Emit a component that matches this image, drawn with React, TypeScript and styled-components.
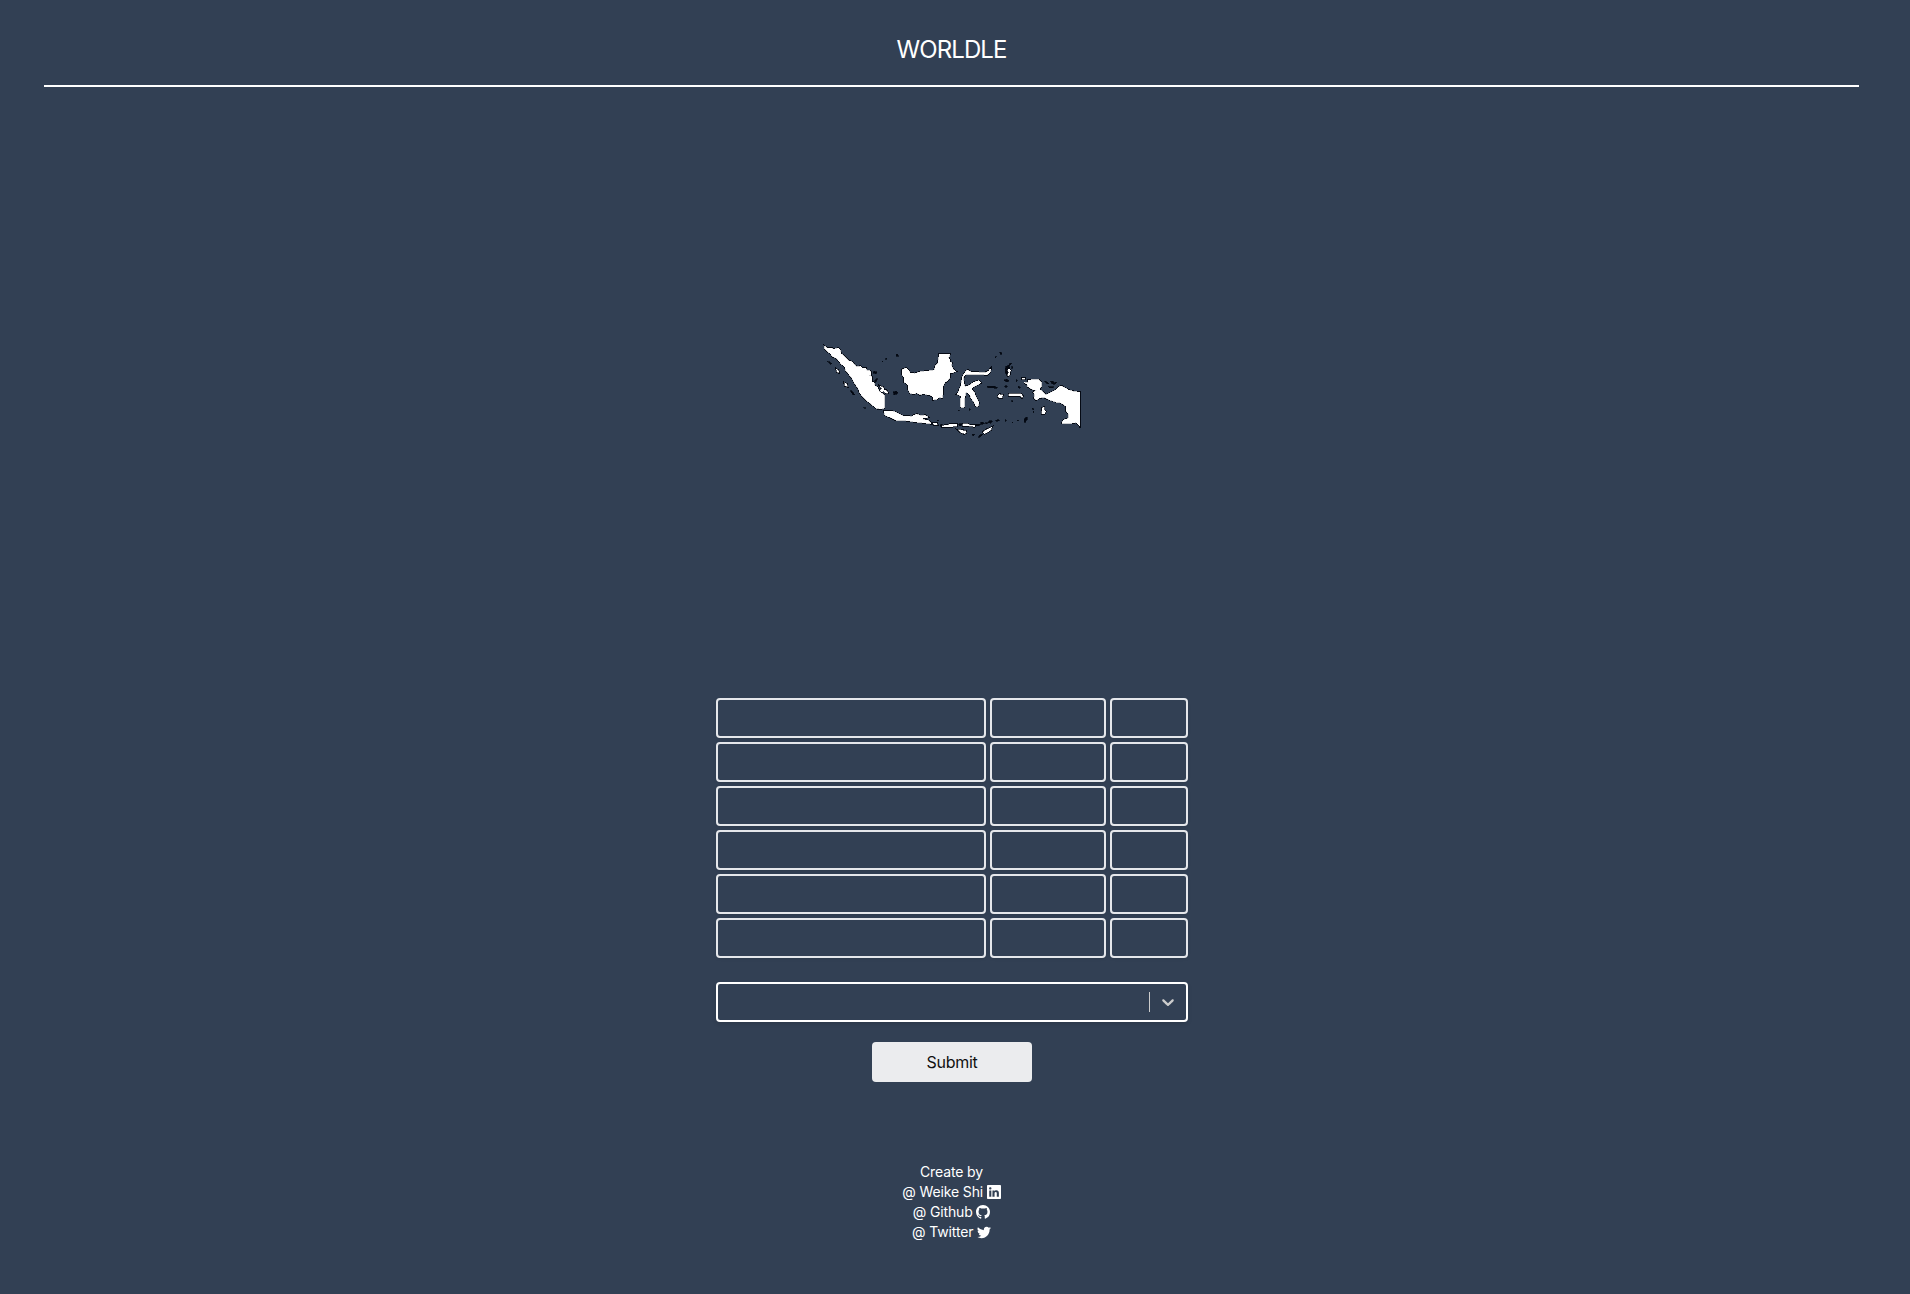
import React from "react";
import styled, { createGlobalStyle } from "styled-components";
import { BsLinkedin, BsGithub, BsTwitter } from "react-icons/bs";

const GlobalStyle = createGlobalStyle`
  * { box-sizing: border-box; }
  body {
    margin: 0;
    background: #324054;
    color: #fff;
    font-family: Inter, "Liberation Sans", sans-serif;
  }
`;

const Page = styled.div`
  width: 1903px;
  height: 1294px;
  display: flex;
  flex-direction: column;
  align-items: center;
  overflow: hidden;
`;

const Header = styled.header`
  width: 1815px;
  height: 87px;
  padding-top: 34px;
  border-bottom: 2px solid #fff;
  text-align: center;
`;

const Title = styled.h1`
  margin: 0;
  font-size: 24px;
  line-height: 32px;
  font-weight: 400;
  letter-spacing: -0.9px;
`;

const MapArea = styled.div`
  height: 611px;
  padding: 253px 0 0 7px;
`;

const MapDrawing = styled.svg`
  display: block;
  width: 270px;
  height: 105px;
`;

const Board = styled.main`
  width: 472px;
  margin-left: 1px;
  display: flex;
  flex-direction: column;
  align-items: center;
`;

const Guesses = styled.div`
  display: grid;
  grid-template-columns: 270px 116px 78px;
  grid-auto-rows: 40px;
  gap: 4px;
`;

const Cell = styled.div`
  border: 2px solid #e5e7eb;
  border-radius: 4px;
  box-shadow: 0 1px 3px rgba(0, 0, 0, 0.1);
`;

const Select = styled.div`
  width: 100%;
  height: 40px;
  margin-top: 24px;
  border: 2px solid #fff;
  border-radius: 4px;
  display: flex;
  align-items: center;
  justify-content: flex-end;
  box-shadow: 0 2px 4px rgba(0, 0, 0, 0.12);
`;

const Separator = styled.span`
  width: 1px;
  height: 20px;
  background: #ccc;
`;

const Indicator = styled.span`
  display: flex;
  padding: 8px;
  color: #ccc;
`;

const Submit = styled.button`
  width: 160px;
  height: 40px;
  margin-top: 20px;
  padding: 0;
  border: 0;
  border-radius: 4px;
  background: #ebecee;
  color: #111;
  font: 400 16px/24px Inter, "Liberation Sans", sans-serif;
  letter-spacing: -0.25px;
`;

const Footer = styled.footer`
  margin-top: 80px;
  font-size: 14px;
  line-height: 20px;
  letter-spacing: -0.13px;
  text-align: center;
`;

const Credit = styled.div`
  display: flex;
  align-items: center;
  justify-content: center;
  gap: 3.5px;
  height: 20px;
`;

const mainIslands = [
  // Sumatra
  "M14 19L21 24L35 24L39 28L55 25L61 30L62 40L73 49L80 57L87 63L96 65L105 77L112 81L121 79L127 84L137 84L139 92L149 93L153 97L152 105L144 108L155 110L155 125L162 128L163 137L173 142L176 153L185 160L192 165L193 205L180 206L168 204L151 190L139 181L129 171L120 159L115 145L104 130L96 114L87 103L78 92L75 81L64 72L55 61L47 53L39 50L30 40L21 33L15 27Z",
  // Borneo
  "M247 89L258 84L266 92L271 99L284 101L300 96L343 91L347 76L354 70L358 43L389 42L388 50L385 53L389 59L390 65L395 69L394 77L399 88L407 94L398 98L390 99L389 112L384 121L375 127L369 138L367 173L357 172L352 177L340 179L339 171L330 165L308 161L300 164L290 158L282 162L270 159L265 149L264 135L253 126L252 112L247 104Z",
  // Java
  "M192 213L205 213L223 215L238 223L250 228L276 230L280 226L291 223L305 228L315 226L324 232L307 234L309 239L323 241L329 245L333 251L318 249L300 247L281 245L263 242L247 240L229 241L213 233L195 225Z",
  // Sulawesi
  "M438 94L443 90L454 97L496 98L506 93L512 86L511 96L502 104L480 103L446 102L435 104L430 113L431 131L435 140L444 139L461 127L477 122L483 128L475 133L464 138L454 146L463 158L467 170L471 177L476 188L474 199L467 198L462 185L455 177L450 166L443 158L436 156L435 168L432 179L433 202L422 201L422 181L424 170L418 165L410 162L415 157L419 147L424 134L427 112L431 104Z",
  // New Guinea
  "M613 128L626 129L625 121L639 119L656 120L664 127L664 138L658 148L671 158L677 166L695 157L706 151L716 142L724 138L737 145L745 150L762 155L779 157L779 257L768 247L757 249L726 249L732 239L745 236L747 224L739 213L739 199L723 188L709 186L685 178L671 171L658 174L649 180L643 175L645 163L640 158L651 151L636 148L624 140L623 134Z",
];

const smallIslands = [
  "M180 138L190 142L192 150L199 151L204 159L198 160L190 153L185 157L179 150L186 147Z",
  "M49 87L55 91L57 98L51 96Z",
  "M73 128L80 132L82 140L75 137Z",
  "M338 249L350 249L352 254L342 254Z",
  "M365 257L379 256L394 252L410 253L411 259L390 260L367 261Z",
  "M428 251L440 251L454 256L465 256L464 260L446 258L429 257Z",
  "M413 269L424 270L437 273L439 280L432 281L420 276Z",
  "M489 276L501 268L516 261L513 269L505 275L493 281Z",
  "M533 168L539 163L548 165L547 173L537 174Z",
  "M566 162L603 161L609 169L606 173L600 167L567 167Z",
  "M667 204L672 201L673 211L677 214L673 222L665 221Z",
  "M568 86L572 92L569 98L571 103L565 108L563 106L566 97L563 91Z",
  "M606 114L614 114L615 117L607 117Z",
];

const islets =
  "M22 64l6 1 8 6-4 2zM92 150l6 6 6 8-3 2-8-9zM131 202l6 2-4 1zM228 42l7 2-1 6-5-2zM195 57l5-3v4zM188 63l2 2-3 1zM220 156l8-3 6 5-3 5-9 1zM162 94l10 2-4 5-10-2zM171 115l-8 8 2 5 7-8zM172 208l5 1-3 2zM415 210l3 1-1 3zM447 206h4v5h-3zM539 37l6 1v5h-4zM524 51l5-2-2 5zM575 69l-6 1-2 6-10 3-2 16 6 12 4-18 2-9zM575 79l4 2-4 7zM553 120l7-2 8 4-4 3-10-1zM501 139h24v5l-22-1zM521 142h10v3h-9zM554 138l8-1v5h-7zM594 139l7 1-1 5-4-1zM574 182l6 1-3 3zM589 119l4 3-3 3zM603 114l8-3 6 3-5 3zM674 123l7 2 5 6-8-1zM691 123l8 1 5 4 6-2-4 6-7 1-5-4zM685 138l5 3 12-1-4 4-10-1zM637 205l5 2-3 3zM640 214l3 1-2 3zM614 234l8-3-1 8-6 9-3-5zM591 241l5-1-2 4zM575 247l5-1-2 3zM556 240l3-1v4l-3 1zM527 241l8-3 3 4-8 3zM506 242l11 1-4 7-8-2zM496 248l7 1-3 4zM480 248l9-1 4 4-8 3zM465 253l10-1 7 2-7 4-10-1zM348 251l7 2-1 3-8-1zM359 254l7-1 8 4-8 4-5-3zM408 250l6 1-2 5h-5zM416 252l12-1-2 5-8 1zM455 284l9-2-3 6zM476 288l8-6 5 2-8 5-4 4zM352 241l4 1-3 2zM778 254h3v9h-3z";

function Indonesia() {
  return (
    <MapDrawing viewBox="0 0 810 315" shapeRendering="crispEdges">
      <g fill="#000" stroke="#050a14" strokeWidth="6">
        {mainIslands.map((d) => (
          <path key={d} d={d} />
        ))}
        {smallIslands.map((d) => (
          <path key={d} d={d} />
        ))}
      </g>
      <path d={islets} fill="#030712" stroke="#050a14" strokeWidth="2" />
      <g fill="#fff" stroke="#fff" strokeWidth="2.4">
        {mainIslands.map((d) => (
          <path key={d} d={d} />
        ))}
      </g>
      <g fill="#fff" stroke="#fff" strokeWidth="1">
        {smallIslands.map((d) => (
          <path key={d} d={d} />
        ))}
      </g>
    </MapDrawing>
  );
}

const ROWS = 6;

export default function App() {
  return (
    <>
      <GlobalStyle />
      <Page>
        <Header>
          <Title>WORLDLE</Title>
        </Header>
        <MapArea>
          <Indonesia />
        </MapArea>
        <Board>
          <Guesses>
            {Array.from({ length: ROWS * 3 }, (_, i) => (
              <Cell key={i} />
            ))}
          </Guesses>
          <Select>
            <Separator />
            <Indicator>
              <svg width="20" height="20" viewBox="0 0 20 20" fill="currentColor">
                <path d="M4.516 7.548c0.436-0.446 1.043-0.481 1.576 0l3.908 3.747 3.908-3.747c0.533-0.481 1.141-0.446 1.574 0 0.436 0.445 0.408 1.197 0 1.615-0.406 0.418-4.695 4.502-4.695 4.502-0.217 0.223-0.502 0.335-0.787 0.335s-0.57-0.112-0.789-0.335c0 0-4.287-4.084-4.695-4.502s-0.436-1.17 0-1.615z" />
              </svg>
            </Indicator>
          </Select>
          <Submit>Submit</Submit>
        </Board>
        <Footer>
          <Credit>Create by</Credit>
          <Credit>
            @ Weike Shi <BsLinkedin />
          </Credit>
          <Credit>
            @ Github <BsGithub />
          </Credit>
          <Credit>
            @ Twitter <BsTwitter />
          </Credit>
        </Footer>
      </Page>
    </>
  );
}
